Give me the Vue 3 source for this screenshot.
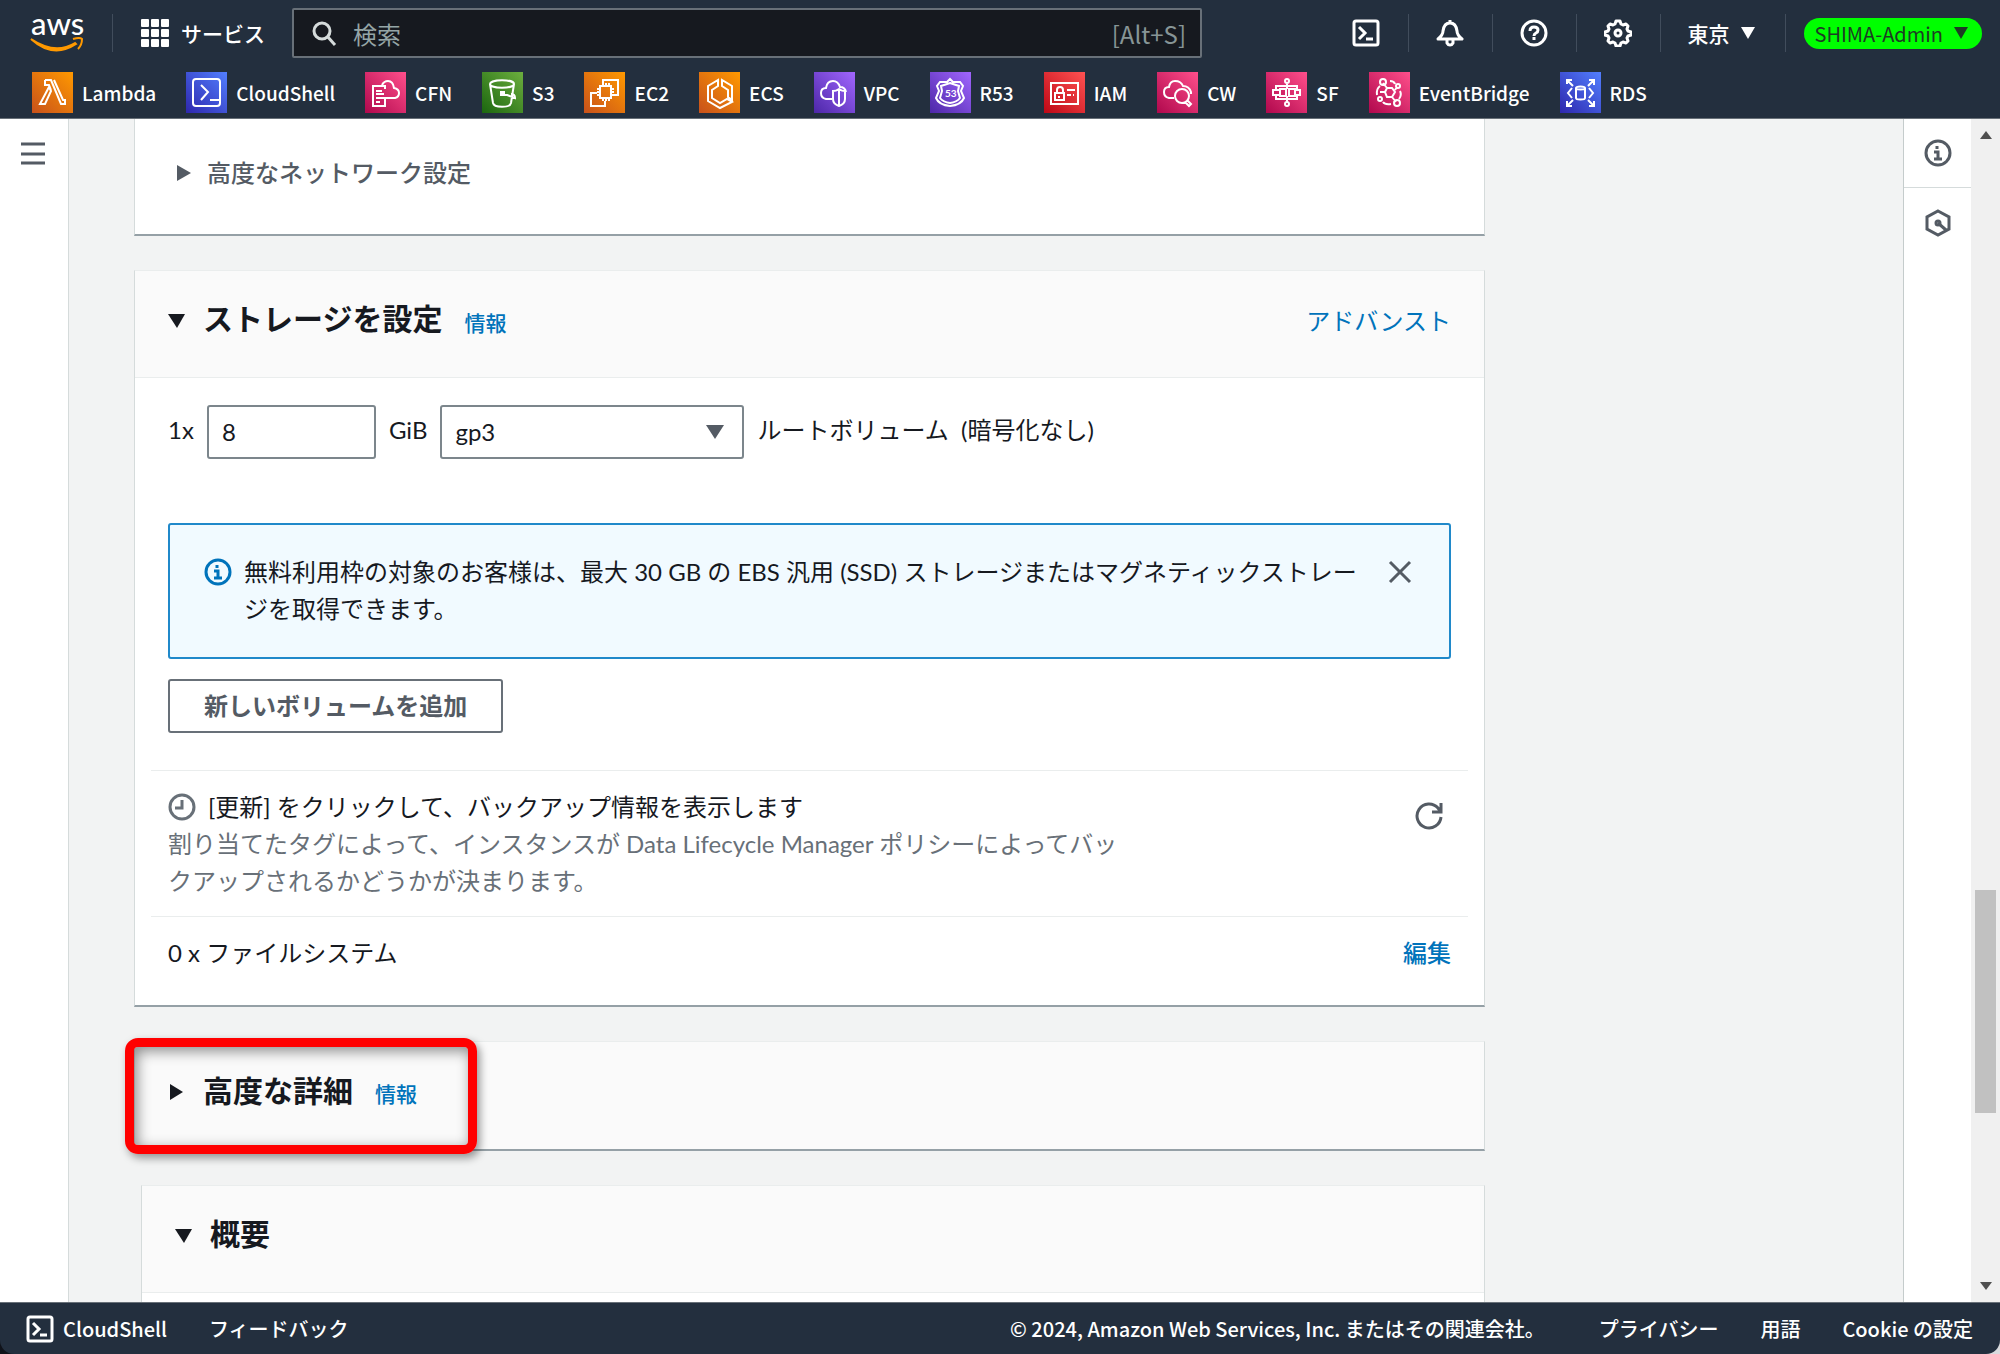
<script setup>
import { ref } from 'vue'

const favorites = [
  { name: 'Lambda', tone: 'orange', d: 'M13 8h6l10 24h4v-4h-2L22 8M13 8v5h4l2 5M19 19l-6 13H8l9-17z' },
  { name: 'CloudShell', tone: 'blue', d: 'M10 7h21a3 3 0 0 1 3 3v21a3 3 0 0 1-3 3H10a3 3 0 0 1-3-3V10a3 3 0 0 1 3-3zM15 13l7 7-7 8M24 28h9' },
  { name: 'CFN', tone: 'pink', d: 'M20 17v-3H8v20h12v-8M11 19h6M11 22h8M11 26h6M11 30h4M17 26h13q4-1 4-5t-5-5q-1-7-6-7-4 0-6 4' },
  { name: 'S3', tone: 'green', d: 'M8 12c0-5 24-5 24 0s-24 5-24 0zM8 12l3 19c1 5 17 5 18 0l3-19M20 21l13 5c0-4-3-4-4-4M19 20h3v3h-3z' },
  { name: 'EC2', tone: 'orange', d: 'M16 14h11v12H16zM19 11v3M22 11v3M25 11v3M19 26v3M22 26v3M25 26v3M13 17h3M13 20h3M13 23h3M27 17h3M27 20h3M27 23h3M19 11V8h15v15h-4M13 21H7v13h14v-5' },
  { name: 'ECS', tone: 'orange', d: 'M19 8v6l-6 4v8l8 5 7-4 5 3-12 6-12-7V14zM23 8v6l6 4v7l4 3V14z' },
  { name: 'VPC', tone: 'purple', d: 'M18 27h-6q-5-1-5-6t5-5q1-7 7-7 5 0 7 6 5 0 6 5M25 17c3 2 5 2 6 2v8q0 5-6 7-6-2-6-7v-8c1 0 3 0 6-2zM25 18v16' },
  { name: 'R53', tone: 'purple', label: '53', d: 'M20 7l3 3h7l3 4-2 5 3 7q-3 7-14 8Q9 33 6 26l3-7-2-5 3-4h7zM20 11l9 3-1 5 2 7q-3 4-10 5-7-1-10-5l2-7-1-5z' },
  { name: 'IAM', tone: 'red', d: 'M7 11h27v21H7zM11 21h9v7h-9zM13 21v-3q0-3 3-3t3 3v3M15 24v2M23 18h8M23 23h4M29 23h1' },
  { name: 'CW', tone: 'pink', d: 'M17 26h-5q-5-1-5-6t5-5q1-6 6-6 6 0 8 5 6 0 8 6v2M18 24a7 7 0 1 0 14 0 7 7 0 1 0-14 0zM28 30l4 4 2-2-4-4' },
  { name: 'SF', tone: 'pink', d: 'M19 9a2 2 0 1 0 4 0 2 2 0 1 0-4 0zM19 32a2 2 0 1 0 4 0 2 2 0 1 0-4 0zM21 11v6M21 24v6M14 17h6v7h-6zM23 17h6v7h-6zM14 18H7v5h7M29 18h5v5h-5M10 23v4h21v-4M10 18v-4h21v4' },
  { name: 'EventBridge', tone: 'pink', d: 'M16 20l2-4h5l3 4-3 5h-5zM18 16l-4-5M23 25l4 5M16 20h-5M26 18l2-3M11 10a3 3 0 1 0 6 0 3 3 0 1 0-6 0zM25 31a3 3 0 1 0 6 0 3 3 0 1 0-6 0zM27 14a2 2 0 1 0 4 0 2 2 0 1 0-4 0zM9 27a2 2 0 1 0 4 0 2 2 0 1 0-4 0zM8 23q-1-6 3-9M21 9q4 0 5 3M31 19q2 4-1 8M22 32q-6 1-8-2' },
  { name: 'RDS', tone: 'blue', d: 'M16 16c0-2 9-2 9 0v10c0 2-9 2-9 0zM16 16c0 2 9 2 9 0M12 16l-4 5 4 5M29 16l4 5-4 5M7 12V8h5M7 8l6 6M29 8h5v5M34 8l-6 6M7 29v5h5M7 34l6-6M34 29v5h-5M34 34l-6-6' },
]

const size = ref(8)
const volumeType = ref('gp3')
</script>

<template>
  <div class="console">
    <header class="top">
      <div class="bar">
        <a href="#" class="logo" aria-label="AWS">
          <svg width="54" height="66" viewBox="0 0 54 66">
            <text x="1" y="35" class="wordmark">aws</text>
            <path d="M1 39q24 16 44 4 l1 1q-23 15-45-5z" fill="#ff9900" stroke="#ff9900" stroke-width="2" />
            <path d="M43 39q7-2 9 0 0 6-4 10" fill="none" stroke="#ff9900" stroke-width="2" />
          </svg>
        </a>
        <span class="rule"></span>
        <button class="services">
          <svg width="28" height="28" viewBox="0 0 28 28" fill="#fff">
            <template v-for="r in 3" :key="r">
              <rect v-for="c in 3" :key="c" :x="(c - 1) * 10" :y="(r - 1) * 10" width="8" height="8" rx="1" />
            </template>
          </svg>
          サービス
        </button>
        <label class="search">
          <svg width="26" height="26" viewBox="0 0 26 26" fill="none" stroke="#d5dbdb" stroke-width="3">
            <circle cx="11" cy="11" r="8" /><path d="M16 16l8 9" />
          </svg>
          <input type="text" placeholder="検索" aria-label="検索" />
          <span>[Alt+S]</span>
        </label>
        <nav class="tools">
          <button aria-label="CloudShell を開く">
            <svg width="28" height="28" viewBox="0 0 28 28" fill="none" stroke="#fff" stroke-width="3">
              <rect x="2" y="2" width="24" height="24" rx="2" /><path d="M7 8l6 6-6 6M14 20h7" />
            </svg>
          </button>
          <button aria-label="通知">
            <svg width="28" height="28" viewBox="0 0 28 28" fill="none" stroke="#fff" stroke-width="3" stroke-linejoin="round">
              <path d="M14 1v3M2 20q5-4 5-8 1-8 7-8t7 8q0 4 5 8zM11 21v3q1 2 3 2t3-2v-3" />
            </svg>
          </button>
          <button aria-label="ヘルプ">
            <svg width="28" height="28" viewBox="0 0 28 28" fill="none" stroke="#fff" stroke-width="3">
              <circle cx="14" cy="14" r="12" /><path d="M10 12q0-4 4-4t4 3q0 2-2 3t-2 3M14 18v3" />
            </svg>
          </button>
          <button aria-label="設定">
            <svg width="28" height="28" viewBox="0 0 28 28" fill="none" stroke="#fff" stroke-width="3" stroke-linejoin="round">
              <path d="M12 2h4l1 3 2 1 3-1 2 2-1 3 1 2 3 1v3l-3 1-1 2 1 3-2 2-3-1-2 1-1 3h-4l-1-3-2-1-3 1-2-2 1-3-1-2-3-1v-3l3-1 1-2-1-3 2-2 3 1 2-1z" />
              <circle cx="14" cy="14" r="3" />
            </svg>
          </button>
          <button class="region">東京
            <svg width="14" height="12" viewBox="0 0 14 12"><path d="M0 0h14l-7 12z" fill="currentColor" /></svg>
          </button>
          <button class="account"><span>SHIMA-Admin
            <svg width="14" height="12" viewBox="0 0 14 12"><path d="M0 0h14l-7 12z" fill="currentColor" /></svg>
          </span></button>
        </nav>
      </div>
      <nav class="favorites">
        <a v-for="f in favorites" :key="f.name" href="#">
          <svg class="tile" :class="f.tone" width="41" height="41" viewBox="0 0 41 41">
            <path :d="f.d" fill="none" stroke="#fff" stroke-width="2" />
            <text v-if="f.label" x="15" y="25" class="tile-text">{{ f.label }}</text>
          </svg>
          {{ f.name }}
        </a>
      </nav>
    </header>

    <div class="middle">
      <aside class="rail">
        <button aria-label="メニュー">
          <svg width="24" height="26" viewBox="0 0 24 26" stroke="#545b64" stroke-width="3"><path d="M0 3h24M0 13h24M0 22h24" /></svg>
        </button>
      </aside>

      <main>
        <section class="card network">
          <button class="expander">
            <svg width="14" height="16" viewBox="0 0 14 16"><path d="M0 0l14 8-14 8z" fill="currentColor" /></svg>
            高度なネットワーク設定
          </button>
        </section>

        <section class="card">
          <div class="head">
            <svg width="17" height="14" viewBox="0 0 17 14"><path d="M0 0h17l-8 14z" fill="currentColor" /></svg>
            <h2>ストレージを設定</h2>
            <a href="#" class="info">情報</a>
            <a href="#" class="advanced">アドバンスト</a>
          </div>
          <div class="body">
            <div class="volume">
              <label for="size">1x</label>
              <input id="size" v-model="size" type="text" />
              <label for="type">GiB</label>
              <span class="select">
                <select id="type" v-model="volumeType"><option>gp3</option></select>
                <svg width="18" height="14" viewBox="0 0 18 14"><path d="M0 0h18l-9 14z" fill="#545b64" /></svg>
              </span>
              <span class="caption">ルートボリューム&nbsp; (暗号化なし)</span>
            </div>
            <div class="notice">
              <svg width="28" height="28" viewBox="0 0 28 28" fill="none" stroke="#0073bb" stroke-width="3">
                <circle cx="14" cy="14" r="12" /><path d="M13 7v3M10 13h4v6M10 20h8" />
              </svg>
              <p>無料利用枠の対象のお客様は、最大 30 GB の EBS 汎用 (SSD) ストレージまたはマグネティックストレージを取得できます。</p>
              <button aria-label="閉じる">
                <svg width="24" height="24" viewBox="0 0 24 24" stroke="#545b64" stroke-width="3"><path d="M2 2l20 20M22 2L2 22" /></svg>
              </button>
            </div>
            <button class="add">新しいボリュームを追加</button>
            <div class="line-row backup">
              <div class="backup-text">
                <div class="backup-title">
                  <svg width="28" height="28" viewBox="0 0 28 28" fill="none" stroke="#687078" stroke-width="3">
                    <circle cx="14" cy="14" r="12" /><path d="M14 7v8H7" />
                  </svg>
                  [更新] をクリックして、バックアップ情報を表示します
                </div>
                <p>割り当てたタグによって、インスタンスが Data Lifecycle Manager ポリシーによってバックアップされるかどうかが決まります。</p>
              </div>
              <button aria-label="更新">
                <svg width="28" height="28" viewBox="0 0 28 28" fill="none" stroke="#545b64" stroke-width="3">
                  <path d="M26 15a12 12 0 1 1-3-9l3 4M26 1v9h-9" />
                </svg>
              </button>
            </div>
            <div class="line-row files">
              <span>0 x ファイルシステム</span>
              <a href="#">編集</a>
            </div>
          </div>
        </section>

        <section class="card details">
          <div class="head">
            <svg width="17" height="18" viewBox="0 0 17 18"><path d="M2 1l13 8-13 8z" fill="currentColor" /></svg>
            <h2>高度な詳細</h2>
            <a href="#" class="info">情報</a>
          </div>
          <div class="highlight"></div>
        </section>

        <section class="card summary">
          <div class="head">
            <svg width="17" height="14" viewBox="0 0 17 14"><path d="M0 0h17l-8 14z" fill="currentColor" /></svg>
            <h2>概要</h2>
          </div>
        </section>
      </main>

      <aside class="panel">
        <button aria-label="情報">
          <svg width="28" height="28" viewBox="0 0 28 28" fill="none" stroke="#545b64" stroke-width="3">
            <circle cx="14" cy="14" r="12" /><path d="M13 7v3M10 13h4v6M10 20h8" />
          </svg>
        </button>
        <button aria-label="チュートリアル">
          <svg width="28" height="28" viewBox="0 0 28 28" fill="none" stroke="#545b64" stroke-width="3">
            <path d="M14 2l11 6v12l-11 6-11-6V8z" /><path d="M14 14l8 7" /><circle cx="14" cy="14" r="2" />
          </svg>
        </button>
      </aside>
      <div class="scroll" aria-hidden="true">
        <svg width="12" height="8" viewBox="0 0 12 8"><path d="M0 8l6-8 6 8z" fill="#505050" /></svg>
        <span class="before"></span>
        <span class="thumb"></span>
        <span class="after"></span>
        <svg width="12" height="8" viewBox="0 0 12 8"><path d="M0 0h12l-6 8z" fill="#505050" /></svg>
      </div>
    </div>

    <footer>
      <button>
        <svg width="28" height="28" viewBox="0 0 28 28" fill="none" stroke="#fff" stroke-width="3">
          <rect x="2" y="2" width="24" height="24" rx="2" /><path d="M7 8l6 6-6 6M14 20h7" />
        </svg>
        CloudShell
      </button>
      <a href="#" class="feedback">フィードバック</a>
      <span class="copy">© 2024, Amazon Web Services, Inc. またはその関連会社。</span>
      <a href="#">プライバシー</a>
      <a href="#">用語</a>
      <a href="#">Cookie の設定</a>
    </footer>
  </div>
</template>

<style>
body { margin: 0; }
</style>

<style scoped>
.console {
  height: 100vh; display: flex; flex-direction: column; overflow: hidden;
  background: linear-gradient(90deg, #10131a 50%, #d8dadd 50%);
  font-family: Lato, "Noto Sans CJK JP", sans-serif; font-size: 24px; line-height: 37px; color: #16191f;
}
* { box-sizing: border-box; }
button { font: inherit; color: inherit; background: none; border: 0; padding: 0; display: flex; align-items: center; }
a { color: #0073bb; text-decoration: none; }
svg { flex: none; display: block; }
p, h2 { margin: 0; }

.top, footer { font-family: "Noto Sans CJK JP", sans-serif; font-size: 20px; }
.top { background: #232f3e; color: #fff; border-bottom: 1px solid #687078; height: 119px; flex: none; }
.bar { display: flex; align-items: center; height: 66px; }
.logo { margin-left: 30px; }
.wordmark { font: 500 31px Lato, sans-serif; fill: #fff; }
.rule { width: 1px; height: 38px; margin: 0 28px; background: #414d5c; }
.services { gap: 12px; font-size: 21px; font-weight: 500; white-space: nowrap; margin-right: 27px; }
.search {
  display: flex; align-items: center; gap: 16px; flex: 0 1 910px; height: 50px; padding: 0 14px 0 17px;
  background: #16191f; border: 2px solid #687078; border-radius: 2px; color: #879596; font-size: 24px;
}
.search input { flex: 1; min-width: 0; border: 0; padding: 0; background: none; font: inherit; color: #fff; outline: 0; }
.search input::placeholder { color: #95a5a6; opacity: 1; }
.tools { display: flex; align-items: center; margin-left: auto; padding-right: 18px; }
.tools button { height: 38px; padding: 0 28px 0 27px; border-left: 1px solid #414d5c; white-space: nowrap; }
.tools button:first-child { border-left: 0; }
.tools .region { gap: 11px; font-size: 21px; font-weight: 500; padding: 0 30px 0 27px; }
.tools .account { padding: 0 0 0 18px; }
.account span {
  display: flex; align-items: center; gap: 11px; height: 31px; padding: 0 14px 0 11px;
  background: #00ff00; border-radius: 16px; color: #1d3c24;
}
.favorites { display: flex; gap: 30px; padding: 6px 32px; font-size: 19px; font-weight: 500; line-height: 41px; white-space: nowrap; }
.favorites a { display: flex; gap: 9px; color: #fff; }
.orange { background: linear-gradient(45deg, #c8511b, #ff9900); }
.blue { background: linear-gradient(45deg, #2e27ad, #527fff); }
.pink { background: linear-gradient(45deg, #b0084d, #ff4f8b); }
.green { background: linear-gradient(45deg, #1b660f, #6cae3e); }
.purple { background: linear-gradient(45deg, #4d27a8, #a166ff); }
.red { background: linear-gradient(45deg, #bd0816, #ff5252); }
.tile-text { font: 700 10px Lato, sans-serif; fill: #fff; }

.middle { flex: 1; min-height: 0; display: flex; background: #f2f3f3; }
.rail { flex: none; width: 69px; background: #fff; border-right: 1px solid #d5dbdb; padding: 22px 0 0 21px; }
main { flex: 1; min-width: 0; padding: 0 24px 0 65px; overflow: hidden; }
.card {
  position: relative; max-width: 1351px; margin-bottom: 34px; background: #fff;
  border: 1px solid #d5dbdb; border-top-color: #eaeded; border-bottom: 2px solid #95a0a6;
}
.network { padding: 35px 0 43px 42px; border-top: 0; }
.expander { gap: 16px; color: #545b64; font-weight: 500; }
.head { display: flex; align-items: center; height: 107px; padding: 0 33px 7px; background: #fafafa; border-bottom: 1px solid #eaeded; }
h2 { margin-left: 18px; padding-bottom: 4px; font-size: 30px; font-weight: 700; line-height: 37px; }
.info { margin: 3px 0 0 22px; font-size: 21px; font-weight: 500; }
.advanced { margin-left: auto; }
.body { padding: 27px 16px 0; }
.volume { display: flex; align-items: center; gap: 13px; padding: 0 17px; }
.volume label, .caption { padding-bottom: 5px; }
.volume input, select { height: 54px; border: 2px solid #7c868c; border-radius: 3px; background: #fff; font: inherit; color: #16191f; padding: 0 13px 2px; }
.volume input { width: 169px; }
.select { position: relative; }
select { width: 304px; appearance: none; display: block; }
.select svg { position: absolute; right: 20px; top: 20px; pointer-events: none; }
.notice {
  display: flex; align-items: flex-start; margin: 64px 17px 0; padding: 28px 37px 30px 34px;
  background: #f1faff; border: 2px solid #2089ca; border-radius: 3px;
}
.notice svg { margin-top: 5px; }
.notice p { flex: 1; margin: 0 16px 0 12px; max-width: 1130px; }
.notice button { margin: 2px 0 0 auto; }
.add { height: 54px; margin: 20px 17px 37px; padding: 0 34px 2px; border: 2px solid #687078; border-radius: 3px; font-weight: 700; color: #545b64; }
.line-row { display: flex; justify-content: space-between; padding: 0 17px; border-top: 1px solid #eaeded; }
.backup { padding: 17px 25px 17px 17px; align-items: flex-start; }
.backup > button { margin-top: 14px; }
.backup-title { display: flex; align-items: center; gap: 12px; }
.backup-text { max-width: 970px; }
.backup-text p { color: #687078; }
.files { padding-top: 17px; padding-bottom: 34px; }
.files a { font-weight: 500; }
.details .head { border-bottom: 0; }
.highlight {
  position: absolute; left: -10px; top: -4px; width: 352px; height: 116px;
  border: 9px solid #f00; border-radius: 13px; pointer-events: none;
  box-shadow: 3px 4px 9px rgba(0, 0, 0, .4), inset 3px 4px 14px rgba(0, 0, 0, .45);
}
.summary { max-width: 1344px; margin-left: 7px; min-height: 200px; }

.panel { flex: none; width: 68px; background: #fff; border-left: 1px solid #c5cccc; }
.panel button { width: 100%; height: 69px; justify-content: center; border-bottom: 1px solid #d5dbdb; }
.panel button:last-child { border-bottom: 0; }
.scroll { flex: none; width: 29px; background: #f0f0f0; display: flex; flex-direction: column; align-items: center; padding: 12px 0; }
.before { flex: 751; }
.thumb { flex: 223; width: 21px; background: #c1c1c1; }
.after { flex: 169; }

footer {
  flex: none; display: flex; align-items: center; height: 52px; padding: 0 27px 0 26px;
  background: #232f3e; color: #fff; border-top: 1px solid #687078; border-radius: 0 0 14px 14px;
  font-weight: 500; white-space: nowrap;
}
footer a { color: #fff; margin-left: 42px; }
footer button { gap: 9px; }
.copy { margin-left: auto; margin-right: 12px; }
</style>
